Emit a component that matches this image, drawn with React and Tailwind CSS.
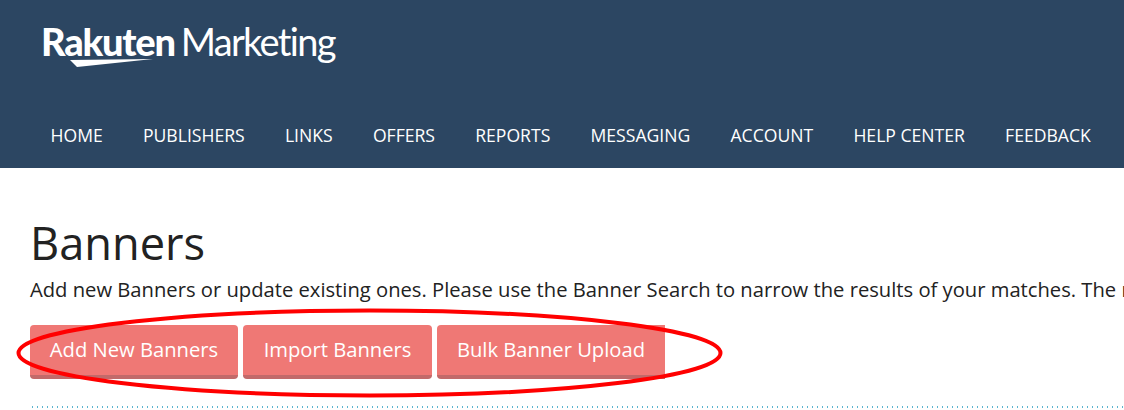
const navItems = ["HOME", "PUBLISHERS", "LINKS", "OFFERS", "REPORTS", "MESSAGING", "ACCOUNT", "HELP CENTER", "FEEDBACK"];

const buttons = [
  { label: "Add New Banners", cls: "w-[208px] rounded-[4px]" },
  { label: "Import Banners", cls: "w-[189px] rounded-[4px]" },
  { label: "Bulk Banner Upload", cls: "w-[228px] rounded-l-[4px]" },
];

export default function App() {
  return (
    <div className="relative h-[410px] w-[1124px] overflow-hidden bg-white font-['Open_Sans','Noto_Sans',sans-serif] text-[#222]">
      {/* Header */}
      <header className="h-[168px] bg-[#2c4662] text-white">
        <div className="relative h-[104px] pl-[41px] pt-[19px]">
          <div className="flex h-[44px] items-center whitespace-nowrap font-['Lato',sans-serif] leading-none">
            <span className="text-[38px] font-black tracking-[-1.2px]">Rakuten</span>
            <span className="ml-[6px] text-[38px] font-normal tracking-[-1.7px]">Marketing</span>
          </div>
          <svg className="absolute left-[70px] top-[59px]" width="84" height="9" viewBox="0 0 84 9">
            <path d="M0 1 L83 0 L7 8 Z" fill="#fff" />
          </svg>
        </div>
        <nav className="flex h-[64px] gap-[40.2px] whitespace-nowrap pl-[50.5px] pt-[19px] text-[17.6px] leading-[24px]">
          {navItems.map((item) => (
            <a key={item}>{item}</a>
          ))}
        </nav>
      </header>

      {/* Page content */}
      <main className="pl-[30px]">
        <h1 className="mt-[45px] text-[45.2px] font-normal leading-[60px]">Banners</h1>
        <p className="mt-[3px] h-[26px] whitespace-nowrap text-[20.2px] leading-[26px]">
          Add new Banners or update existing ones. Please use the Banner Search to narrow the results of your matches. The results will be displayed below.
        </p>
        <div className="mt-[23px] flex gap-[5px]">
          {buttons.map((b) => (
            <button
              key={b.label}
              className={`h-[54px] border-b-[4px] border-[#c26a6a] bg-[#ef7875] pb-[1px] text-[20.2px] text-white ${b.cls}`}
            >
              {b.label}
            </button>
          ))}
        </div>
        <div className="mt-[27px] h-[2px] bg-[repeating-linear-gradient(90deg,#5bb5d0_0,#5bb5d0_1px,transparent_1px,transparent_5px)] ml-[2px]"></div>
      </main>

      {/* Red hand-drawn annotation */}
      <svg className="absolute left-0 top-0 pointer-events-none" width="1124" height="410">
        <ellipse cx="369.5" cy="353" rx="351" ry="42.5" fill="none" stroke="#ff0000" strokeWidth="4" />
      </svg>
    </div>
  );
}
